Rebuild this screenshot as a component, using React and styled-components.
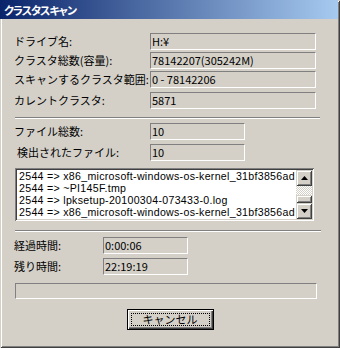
import React from 'react';
import styled, { createGlobalStyle } from 'styled-components';

const Global = createGlobalStyle`
  html, body { margin: 0; padding: 0; background: #d4d0c8; }
  * { box-sizing: border-box; }
`;

const Window = styled.div`
    width: 340px;
    height: 348px;
    background: #d4d0c8;
    display: flex;
    flex-direction: column;
    box-shadow: inset 1px 1px #d4d0c8, inset -1px -1px #404040,
        inset 2px 2px #ffffff, inset -2px -2px #808080;
    font-family: "Noto Sans CJK JP", sans-serif;
    font-size: 11px;
    color: #000;
    overflow: hidden;
`;

const TitleBar = styled.div`
    height: 19px;
    margin-right: 2px;
    display: flex;
    align-items: center;
    padding-left: 4px;
    background: linear-gradient(to right, #0a246a, #a6caf0);
    color: #fff;
    font-weight: bold;
    font-size: 11px;
    font-feature-settings: "palt";
    letter-spacing: -1px;
`;

const Content = styled.div`
    display: flex;
    flex-direction: column;
    padding-left: 14px;
`;

const Row = styled.div`
    display: flex;
    align-items: center;
    height: 17px;
    margin-top: ${p => p.top}px;
`;

const Label = styled.div`
    width: ${p => p.w}px;
    padding-left: ${p => p.indent || 0}px;
    white-space: nowrap;
    line-height: 17px;
`;

const Field = styled.div`
    width: ${p => p.w}px;
    height: 17px;
    border-top: 1px solid #808080;
    border-left: 1px solid #808080;
    border-bottom: 1px solid #ffffff;
    border-right: 1px solid #ffffff;
    padding-left: 1px;
    line-height: 15px;
    white-space: nowrap;
    overflow: hidden;
`;

const Separator = styled.div`
    width: ${p => p.w}px;
    height: 2px;
    margin-left: 1px;
    margin-top: ${p => p.top}px;
    border-top: 1px solid #808080;
    border-bottom: 1px solid #ffffff;
`;

const ListBox = styled.div`
    width: 299px;
    height: 53px;
    margin-left: 1px;
    margin-top: 7px;
    display: flex;
    background: #fff;
    box-shadow: inset 1px 1px #808080, inset -1px -1px #ffffff,
        inset 2px 2px #404040, inset -2px -2px #d4d0c8;
    padding: 2px;
`;

const Lines = styled.div`
    flex: 1;
    overflow: hidden;
    padding-left: 2px;
    font-family: "Liberation Sans", "Noto Sans CJK JP", sans-serif;
    font-size: 10.6px;
    letter-spacing: 0.3px;
    line-height: 12px;
`;

const Line = styled.div`
    height: 12px;
    white-space: nowrap;
`;

const ScrollBar = styled.div`
    width: 16px;
    display: flex;
    flex-direction: column;
`;

const ScrollButton = styled.div`
    height: 16px;
    background: #d4d0c8;
    box-shadow: inset 1px 1px #d4d0c8, inset -1px -1px #404040,
        inset 2px 2px #ffffff, inset -2px -2px #808080;
    display: flex;
    align-items: center;
    justify-content: center;
`;

const Track = styled.div`
    flex: 1;
    background: repeating-conic-gradient(#ffffff 0 25%, #d4d0c8 0 50%) 0 0 / 2px 2px;
    display: flex;
    flex-direction: column;
    justify-content: flex-end;
`;

const Thumb = styled.div`
    height: 8px;
    background: #d4d0c8;
    box-shadow: inset 1px 1px #d4d0c8, inset -1px -1px #404040,
        inset 2px 2px #ffffff, inset -2px -2px #808080;
`;

const ArrowIcon = styled.svg`
    display: block;
`;

const Progress = styled.div`
    width: 302px;
    height: 16px;
    margin-left: 1px;
    margin-top: 8px;
    border-top: 1px solid #808080;
    border-left: 1px solid #808080;
    border-bottom: 1px solid #ffffff;
    border-right: 1px solid #ffffff;
`;

const ButtonRow = styled.div`
    display: flex;
    justify-content: center;
    margin-top: 10px;
    padding-right: 14px;
`;

const Button = styled.button`
    width: 87px;
    height: 21px;
    padding: 3px;
    border: 1px solid #000;
    background: #d4d0c8;
    box-shadow: inset 1px 1px #ffffff, inset -1px -1px #404040,
        inset -2px -2px #808080;
    font-family: "Noto Sans CJK JP", sans-serif;
    font-size: 11px;
    color: #000;
    display: flex;
`;

const Focus = styled.span`
    flex: 1;
    border: 1px dotted #000;
    display: flex;
    align-items: center;
    justify-content: center;
    line-height: 11px;
`;

const Arrow = ({ down }) => (
    <ArrowIcon width="7" height="4" viewBox="0 0 7 4">
        <polygon points={down ? '0,0 7,0 3.5,4' : '3.5,0 7,4 0,4'} fill="#000" />
    </ArrowIcon>
);

const scanRows = [
    { label: 'ドライブ名:', value: 'H:¥', top: 14 },
    { label: 'クラスタ総数(容量):', value: '78142207(305242M)', top: 2 },
    { label: 'スキャンするクラスタ範囲:', value: '0 - 78142206', top: 2 },
    { label: 'カレントクラスタ:', value: '5871', top: 4 },
];

const files = [
    '2544 => x86_microsoft-windows-os-kernel_31bf3856ad',
    '2544 => ~PI145F.tmp',
    '2544 => lpksetup-20100304-073433-0.log',
    '2544 => x86_microsoft-windows-os-kernel_31bf3856ad',
];

function App() {
    return (
        <React.Fragment>
            <Global />
            <Window>
                <TitleBar>クラスタスキャン</TitleBar>
                <Content>
                    {scanRows.map((row, i) => (
                        <Row key={i} top={row.top}>
                            <Label w={136}>{row.label}</Label>
                            <Field w={166}>{row.value}</Field>
                        </Row>
                    ))}

                    <Separator w={305} top={8} />

                    <Row top={4}>
                        <Label w={136}>ファイル総数:</Label>
                        <Field w={95}>10</Field>
                    </Row>
                    <Row top={4}>
                        <Label w={136} indent={3}>検出されたファイル:</Label>
                        <Field w={95}>10</Field>
                    </Row>

                    <ListBox>
                        <Lines>
                            {files.map((f, i) => <Line key={i}>{f}</Line>)}
                        </Lines>
                        <ScrollBar>
                            <ScrollButton><Arrow /></ScrollButton>
                            <Track><Thumb /></Track>
                            <ScrollButton><Arrow down /></ScrollButton>
                        </ScrollBar>
                    </ListBox>

                    <Separator w={306} top={9} />

                    <Row top={5}>
                        <Label w={89}>経過時間:</Label>
                        <Field w={85}>0:00:06</Field>
                    </Row>
                    <Row top={4}>
                        <Label w={89}>残り時間:</Label>
                        <Field w={85}>22:19:19</Field>
                    </Row>

                    <Progress />

                    <ButtonRow>
                        <Button>
                            <Focus>キャンセル</Focus>
                        </Button>
                    </ButtonRow>
                </Content>
            </Window>
        </React.Fragment>
    );
}

export default App;
